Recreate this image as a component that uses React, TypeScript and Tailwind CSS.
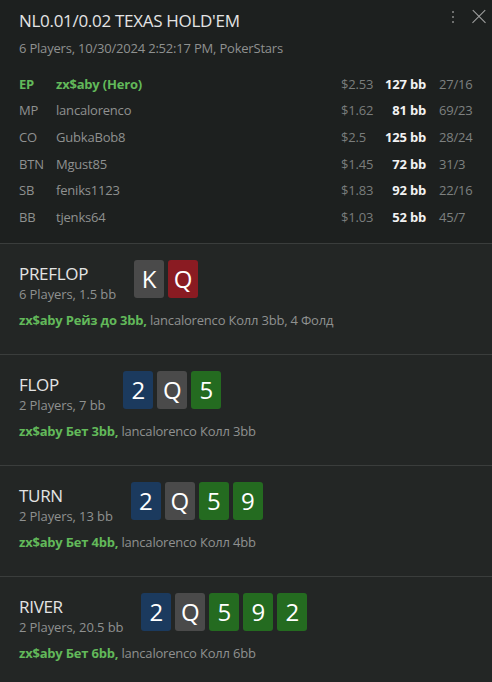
import React from "react";

type Card = { r: string; c: "gray" | "red" | "blue" | "green" };

const cardBg: Record<string, string> = {
  gray: "bg-[#4a4a4a]",
  red: "bg-[#8a1b22]",
  blue: "bg-[#1b3a5e]",
  green: "bg-[#246b20]",
};

const players = [
  { pos: "EP", name: "zx$aby (Hero)", usd: "$2.53", bb: "127 bb", st: "27/16", hero: true },
  { pos: "MP", name: "lancalorenco", usd: "$1.62", bb: "81 bb", st: "69/23" },
  { pos: "CO", name: "GubkaBob8", usd: "$2.5", bb: "125 bb", st: "28/24" },
  { pos: "BTN", name: "Mgust85", usd: "$1.45", bb: "72 bb", st: "31/3" },
  { pos: "SB", name: "feniks1123", usd: "$1.83", bb: "92 bb", st: "22/16" },
  { pos: "BB", name: "tjenks64", usd: "$1.03", bb: "52 bb", st: "45/7" },
];

const streets: { t: string; s: string; cards: Card[]; hero: string; rest: string }[] = [
  {
    t: "PREFLOP",
    s: "6 Players, 1.5 bb",
    cards: [
      { r: "K", c: "gray" },
      { r: "Q", c: "red" },
    ],
    hero: "zx$aby Рейз до 3bb,",
    rest: "lancalorenco Колл 3bb, 4 Фолд",
  },
  {
    t: "FLOP",
    s: "2 Players, 7 bb",
    cards: [
      { r: "2", c: "blue" },
      { r: "Q", c: "gray" },
      { r: "5", c: "green" },
    ],
    hero: "zx$aby Бет 3bb,",
    rest: "lancalorenco Колл 3bb",
  },
  {
    t: "TURN",
    s: "2 Players, 13 bb",
    cards: [
      { r: "2", c: "blue" },
      { r: "Q", c: "gray" },
      { r: "5", c: "green" },
      { r: "9", c: "green" },
    ],
    hero: "zx$aby Бет 4bb,",
    rest: "lancalorenco Колл 4bb",
  },
  {
    t: "RIVER",
    s: "2 Players, 20.5 bb",
    cards: [
      { r: "2", c: "blue" },
      { r: "Q", c: "gray" },
      { r: "5", c: "green" },
      { r: "9", c: "green" },
      { r: "2", c: "green" },
    ],
    hero: "zx$aby Бет 6bb,",
    rest: "lancalorenco Колл 6bb",
  },
];

export default function App() {
  return (
    <div
      className="w-[492px] h-[682px] overflow-hidden bg-[#1d201f] text-[#9a9c9b]"
      style={{ fontFamily: '"Open Sans", "Noto Sans", sans-serif' }}
    >
      <div className="pl-[19px] pr-[6px] pt-[9px] h-[243px]">
        <div className="flex items-start">
          <div className="flex-1 text-[17px] leading-[24px] text-[#e4e4e4] tracking-[-0.3px]">
            NL0.01/0.02 TEXAS HOLD'EM
          </div>
          <div className="flex items-center gap-[18px] pt-[1px] shrink-0">
            <div className="flex flex-col gap-[3px]">
              <span className="block w-[2px] h-[2px] bg-[#8a8a8a] rounded-full" />
              <span className="block w-[2px] h-[2px] bg-[#8a8a8a] rounded-full" />
              <span className="block w-[2px] h-[2px] bg-[#8a8a8a] rounded-full" />
            </div>
            <div className="relative w-[14px] h-[14px] shrink-0">
              <span className="absolute left-[-2px] top-[6px] w-[18px] h-[1.4px] bg-[#a3a3a3] rotate-45" />
              <span className="absolute left-[-2px] top-[6px] w-[18px] h-[1.4px] bg-[#a3a3a3] -rotate-45" />
            </div>
          </div>
        </div>
        <div className="text-[13px] leading-[18px] mt-[6px] text-[#8f9190] tracking-[-0.2px]">
          6 Players, 10/30/2024 2:52:17 PM, PokerStars
        </div>
        <div className="mt-[14px] mr-[13px] text-[13px]">
          {players.map((p) => (
            <div key={p.pos} className="flex items-center h-[26.7px] tracking-[-0.2px]">
              <div
                className={
                  "w-[37px] " + (p.hero ? "text-[#62b95a] font-bold" : "text-[#8f9190]")
                }
              >
                {p.pos}
              </div>
              <div
                className={
                  "flex-1 " + (p.hero ? "text-[#62b95a] font-bold" : "text-[#8f9190]")
                }
              >
                {p.name}
              </div>
              <div className="w-[44px] text-[#7a7d7c]">{p.usd}</div>
              <div className="w-[41px] text-right font-bold text-[#f2f2f2]">{p.bb}</div>
              <div className="w-[47px] pl-[13px] text-[#7e8180]">{p.st}</div>
            </div>
          ))}
        </div>
      </div>
      {streets.map((s) => (
        <div
          key={s.t}
          className="h-[111px] border-t border-[#3a3d3c] bg-[#232625] px-[19px] pt-[16px]"
        >
          <div className="flex items-start">
            <div className="pt-[3px]">
              <div className="text-[17px] leading-[22px] text-[#e4e4e4] tracking-[-0.3px]">
                {s.t}
              </div>
              <div className="text-[13px] leading-[18px] text-[#8f9190] tracking-[-0.1px]">
                {s.s}
              </div>
            </div>
            <div className="ml-[18px] flex gap-[4px]">
              {s.cards.map((c, i) => (
                <div
                  key={i}
                  className={
                    "w-[30px] h-[38px] rounded-[3px] flex items-center justify-center text-[24px] text-white " +
                    cardBg[c.c]
                  }
                >
                  {c.r}
                </div>
              ))}
            </div>
          </div>
          <div className="mt-[8px] text-[13px] leading-[18px] tracking-[-0.2px]">
            <span className="font-bold text-[#62b95a]">{s.hero}</span>{" "}
            <span className="text-[#8f9190]">{s.rest}</span>
          </div>
        </div>
      ))}
    </div>
  );
}
